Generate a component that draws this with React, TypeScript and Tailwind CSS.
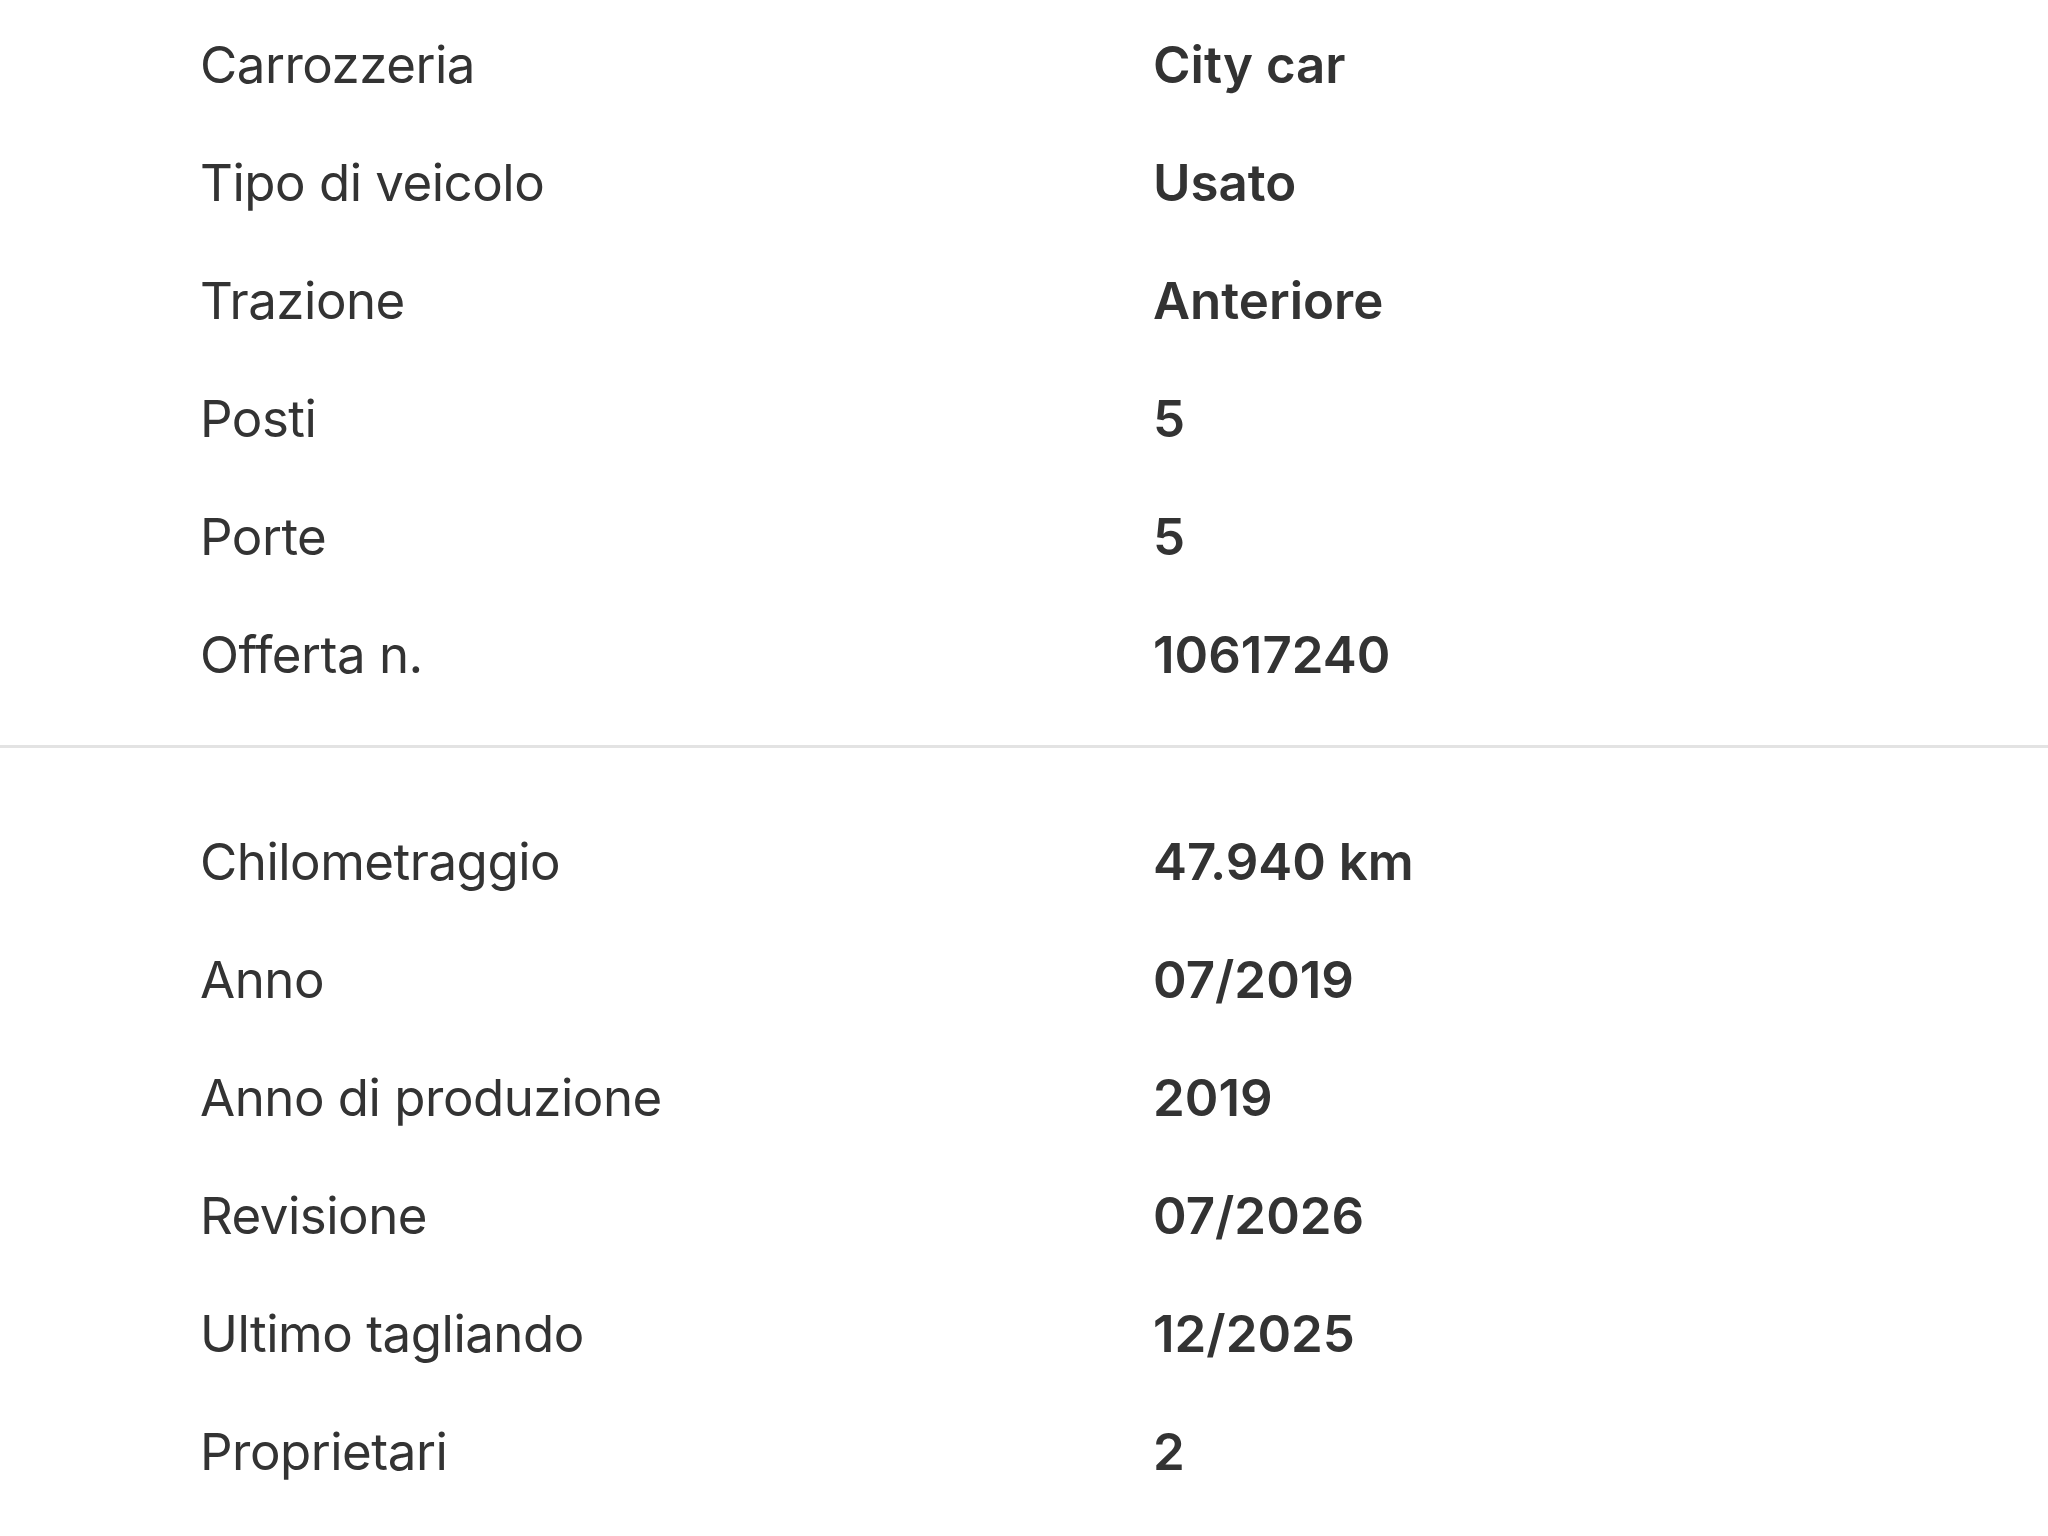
import React from "react";

const group1: [string, string][] = [
  ["Carrozzeria", "City car"],
  ["Tipo di veicolo", "Usato"],
  ["Trazione", "Anteriore"],
  ["Posti", "5"],
  ["Porte", "5"],
  ["Offerta n.", "10617240"],
];

const group2: [string, string][] = [
  ["Chilometraggio", "47.940 km"],
  ["Anno", "07/2019"],
  ["Anno di produzione", "2019"],
  ["Revisione", "07/2026"],
  ["Ultimo tagliando", "12/2025"],
  ["Proprietari", "2"],
];

function Rows({ items }: { items: [string, string][] }) {
  return (
    <div className="flex flex-col pl-[200px]">
      {items.map(([k, v]) => (
        <div key={k} className="flex h-[118px] items-center">
          <div className="w-[953px] text-[51px] font-normal tracking-[-0.5px]">{k}</div>
          <div className="text-[51px] font-semibold">{v}</div>
        </div>
      ))}
    </div>
  );
}

export default function App() {
  return (
    <div
      className="w-[2048px] h-[1536px] overflow-hidden bg-white text-[#333333]"
      style={{ fontFamily: "Inter, 'Noto Sans', sans-serif" }}
    >
      <div className="pt-[6px]">
        <Rows items={group1} />
      </div>
      <div className="mt-[31px] h-[3px] bg-[#e3e3e3]" />
      <div className="pt-[55px]">
        <Rows items={group2} />
      </div>
    </div>
  );
}
